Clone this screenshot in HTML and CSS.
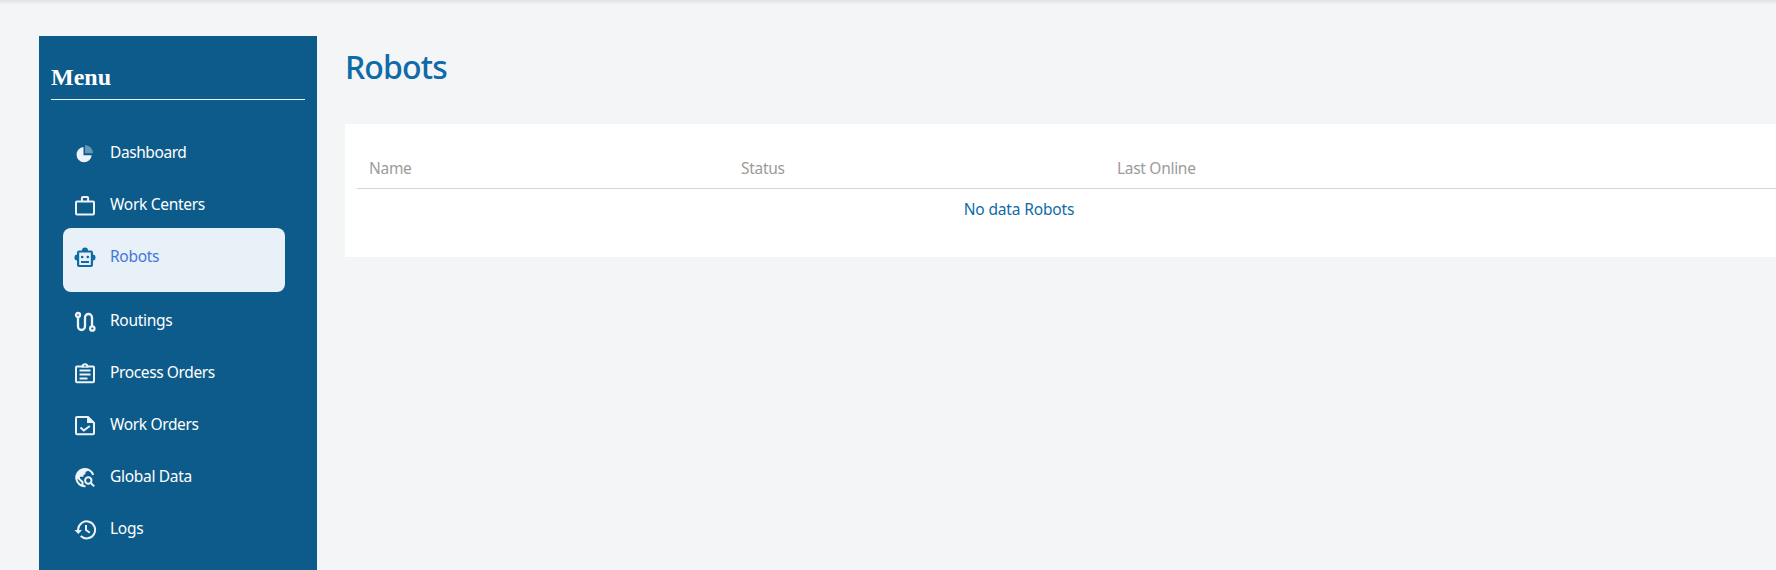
FILE: index.html
```html
<!DOCTYPE html>
<html lang="en">
<head>
<meta charset="utf-8">
<title>Robots</title>
<link rel="stylesheet" href="styles.css">
</head>
<body>
<div class="layout">
  <aside class="sidebar">
    <h2 class="menu-title">Menu</h2>
    <nav class="menu">
      <a class="item"><svg class="icon" viewBox="0 0 24 24"><path fill="currentColor" d="M10.500 5v8.200h8.200A7.600 7.600 0 1 1 10.500 5z"/><path fill="currentColor" opacity=".4" d="M12 3a8.200 8.200 0 0 1 8 8.300h-8z"/></svg><span class="label dashboard">Dashboard</span></a>
      <a class="item"><svg class="icon" viewBox="0 0 24 24"><path class="stroke" d="M4 7.500h16a1 1 0 0 1 1 1v11a1 1 0 0 1-1 1H4a1 1 0 0 1-1-1v-11a1 1 0 0 1 1-1zM8.900 7V4a1 1 0 0 1 1-1h4.200a1 1 0 0 1 1 1v3"/></svg><span class="label centers">Work Centers</span></a>
      <a class="item active"><svg class="icon" viewBox="0 0 24 24"><path fill="currentColor" fill-rule="evenodd" d="M9 4.500a3 3 0 0 1 6 0h3a2 2 0 0 1 2 2V8.500a2.500 3 0 0 1 0 6V19a2 2 0 0 1-2 2H6a2 2 0 0 1-2-2v-4.500a2.500 3 0 0 1 0-6V6.500a2 2 0 0 1 2-2zM6.200 6.500V19h11.600V6.500z"/><circle cx="9.200" cy="11" r="1.300" fill="currentColor"/><circle cx="14.800" cy="11" r="1.300" fill="currentColor"/><path fill="currentColor" d="M8 15h8v2H8z"/></svg><span class="label robots">Robots</span></a>
      <a class="item"><svg class="icon" viewBox="0 0 24 24"><path class="stroke bold" d="M5 7v9.500a3.500 3.500 0 0 0 7 0v-9a3.500 3.500 0 0 1 7 0V17"/><circle class="stroke bold" cx="5" cy="5" r="2"/><circle class="stroke bold" cx="19.300" cy="18.500" r="2.200"/></svg><span class="label routings">Routings</span></a>
      <a class="item"><svg class="icon" viewBox="0 0 24 24"><path class="stroke" d="M4 4.500h16a1 1 0 0 1 1 1v13.700a1 1 0 0 1-1 1H4a1 1 0 0 1-1-1V5.500a1 1 0 0 1 1-1z"/><path fill="currentColor" d="M8.500 4a3.600 3.600 0 0 1 7 0v1.500h-7z"/><circle cx="12" cy="3.900" r=".8" fill="#0d5b8a"/><path class="stroke" d="M6.500 8.500h11M6.500 12.500h11M6.500 16.500h8"/></svg><span class="label process">Process Orders</span></a>
      <a class="item"><svg class="icon" viewBox="0 0 24 24"><path class="stroke" d="M15 3H4a1 1 0 0 0-1 1v15.200a1 1 0 0 0 1 1h16a1 1 0 0 0 1-1V9z"/><path fill="currentColor" d="M14 2l8 7h-8z"/><path class="stroke" d="M7.500 13.500l3.300 3 6-4.500"/></svg><span class="label orders">Work Orders</span></a>
      <a class="item"><svg class="icon" viewBox="0 0 24 24"><path class="stroke" d="M12.500 20.300A8.700 8.700 0 1 1 20.200 9M3.500 10.500l6 5.500v3"/><path fill="currentColor" d="M3 10l4 3.300v-2.500h3.500V9l2-1V6l3-1.500v-1C9 .8 4 4.500 3 10z"/><circle class="stroke" cx="15.300" cy="14.500" r="3.200"/><path class="stroke" d="M17.800 17l3.400 3.400"/></svg><span class="label global">Global Data</span></a>
      <a class="item"><svg class="icon" viewBox="0 0 24 24"><path class="stroke" d="M5.100 13v-1.500a8.500 8.500 0 1 1 2.600 6.500M13 7v5l3.800 2.800"/><path fill="currentColor" d="M1.500 12h7.500l-3.700 4z"/></svg><span class="label logs">Logs</span></a>
    </nav>
  </aside>
  <main class="content">
    <h1 class="title">Robots</h1>
    <section class="card">
      <div class="table-head"><span class="name">Name</span><span class="status">Status</span><span class="online">Last Online</span></div>
      <div class="empty">No data Robots</div>
    </section>
  </main>
</div>
</body>
</html>
```
FILE: styles.css
```css
* { box-sizing: border-box; }
body {
  margin: 0;
  height: 570px;
  overflow: hidden;
  background: linear-gradient(#e0e2e4, #f3f5f7 5px) #f3f5f7;
  font: 15.5px/24px "Noto Sans", sans-serif;
}
.layout { display: flex; height: 570px; padding: 36px 0 0 39px; }
.sidebar { width: 278px; padding: 0 12px; background: #0d5b8a; color: #fff; }
.menu-title {
  height: 64px;
  margin: 0;
  padding-top: 27px;
  border-bottom: 1px solid #e8f0f8;
  font: bold 24px/28px "Liberation Serif", serif;
}
.menu { padding: 24px 20px 0 12px; }
.item { display: flex; height: 52px; padding: 16px 0 0 10px; border-radius: 8px; }
.item.active { height: 64px; background: #e8f0f8; color: #4377df; }
.icon { width: 24px; height: 24px; margin: 2px 13px 0 0; color: #edf3f8; flex: none; }
.active .icon { color: #0e6ba8; }
.stroke { fill: none; stroke: currentColor; stroke-width: 2; }
.stroke.bold { stroke-width: 2.3; }
.label { white-space: nowrap; letter-spacing: -0.3px; }
.dashboard { letter-spacing: -0.42px; }
.process { letter-spacing: -0.38px; }
.orders { letter-spacing: -0.35px; }
.content { flex: 1; margin-left: 28px; color: #0e6ba8; }
.title { height: 88px; margin: 0; padding-top: 10px; font-size: 32px; font-weight: 500; line-height: 42px; letter-spacing: -0.85px; }
.card { height: 133px; padding: 32px 0 0 12px; background: #fff; }
.table-head {
  display: grid;
  grid-template-columns: 372px 376px 1fr;
  height: 33px;
  padding-left: 12px;
  border-bottom: 1px solid #d6d6d6;
  color: #9b9b9b;
  letter-spacing: -0.3px;
}
.empty { width: 1324px; padding-top: 8px; text-align: center; letter-spacing: -0.15px; }
```
